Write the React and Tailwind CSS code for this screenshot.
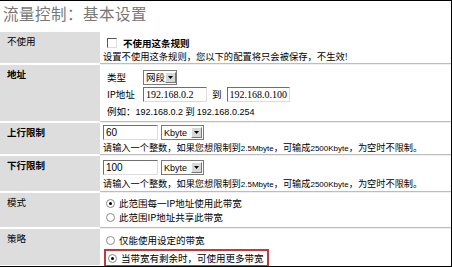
import React from "react";

const cjk = "font-['Noto_Sans_CJK_SC','Noto_Sans',sans-serif]";

const Sep = () => (
  <div className="flex h-[2px]">
    <div className="w-[100px] shrink-0 bg-white" />
    <div className="flex-1 flex flex-col">
      <div className="h-px bg-[#bdbdbd]" />
      <div className="h-px bg-[#f0f0f0]" />
    </div>
  </div>
);

const Row = ({ label, bold, h, children }) => (
  <div className={`flex ${h}`}>
    <div className={`w-[100px] shrink-0 bg-[#dddddd] pl-[7px] pt-[2px] leading-[14px] ${bold ? "font-bold" : ""}`}>
      {label}
    </div>
    <div className="flex-1 pl-[3px] flex flex-col">{children}</div>
  </div>
);

const TextBox = ({ value, w, serif }) => (
  <div
    className={`${w} h-[15px] bg-white border border-t-[#6f6f6f] border-l-[#6f6f6f] border-b-[#dcdcdc] border-r-[#dcdcdc] pl-[2px] text-[10px] leading-[13px] ${
      serif ? "font-['Liberation_Serif',serif]" : "font-['Liberation_Sans',sans-serif] text-[9px]"
    }`}
  >
    {value}
  </div>
);

const Select = ({ value, w }) => (
  <div className={`${w} h-[15px] flex items-center bg-white border border-[#7a7a7a] pl-[2px] whitespace-nowrap`}>
    <span className="flex-1 leading-[13px] whitespace-nowrap">{value}</span>
    <span className="w-[11px] h-[11px] mr-px shrink-0 bg-[#d8d8d8] border border-t-white border-l-white border-b-[#777] border-r-[#777] flex items-center justify-center">
      <svg width="5" height="3" viewBox="0 0 5 3">
        <path d="M0 0h5L2.5 3z" fill="#000" />
      </svg>
    </span>
  </div>
);

const Radio = ({ checked }) => (
  <span className="w-[9px] h-[9px] rounded-full bg-white border border-[#8a8a8a] flex items-center justify-center mr-[4px] shrink-0">
    {checked && <span className="w-[3px] h-[3px] rounded-full bg-black" />}
  </span>
);

const Hint = ({ className }) => (
  <div className={`leading-[12px] text-[9.2px] whitespace-nowrap ${className}`}>
    请输入一个整数，如果您想限制到<span className="font-['Liberation_Sans',sans-serif] text-[8px]">2.5Mbyte</span>，可输成<span className="font-['Liberation_Sans',sans-serif] text-[8px]">2500Kbyte</span>，为空时不限制。
  </div>
);

export default function App() {
  return (
    <div className={`w-[452px] h-[267px] overflow-hidden bg-white border-t border-r border-b border-black text-[9.5px] text-black ${cjk}`}>
      <div className="h-[31px] pl-[3px] pt-[2px] text-[15.5px] leading-[20px] text-[#777] tracking-[0.5px]">
        流量控制：基本设置
      </div>

      <Row label="不使用" h="h-[31px]">
        <div className="flex items-center mt-[5px] ml-[4px] h-[12px]">
          <span className="w-[10px] h-[10px] bg-white border border-t-[#555] border-l-[#555] border-b-[#ddd] border-r-[#ddd] mr-[6px]" />
          <span className="font-bold">不使用这条规则</span>
        </div>
        <div className="leading-[12px] mt-[1px] text-[9.3px]">设置不使用这条规则，您以下的配置将只会被保存，不生效!</div>
      </Row>
      <Sep />

      <Row label="地址" bold h="h-[56px]">
        <div className="flex items-center mt-[5px] ml-[4px] h-[15px]">
          <span className="w-[36px]">类型</span>
          <Select value="网段" w="w-[34px]" />
        </div>
        <div className="flex items-center mt-[2px] ml-[4px] h-[15px]">
          <span className="w-[36px]">IP地址</span>
          <TextBox value="192.168.0.2" w="w-[64px]" serif />
          <span className="mx-[5px]">到</span>
          <TextBox value="192.168.0.100" w="w-[63px]" serif />
        </div>
        <div className="mt-[3px] ml-[4px] leading-[12px]">
          例如：<span className="font-['Liberation_Sans',sans-serif] text-[9px]">192.168.0.2</span> 到{" "}
          <span className="font-['Liberation_Sans',sans-serif] text-[9px]">192.168.0.254</span>
        </div>
      </Row>
      <Sep />

      <Row label="上行限制" bold h="h-[31px]">
        <div className="flex items-center mt-[2px] h-[15px]">
          <TextBox value="60" w="w-[55px]" />
          <span className="w-[3px]" />
          <Select value={<span className="font-['Liberation_Sans',sans-serif] text-[9px]">Kbyte</span>} w="w-[43px]" />
        </div>
        <Hint className="mt-[1px]" />
      </Row>
      <Sep />

      <Row label="下行限制" bold h="h-[35px]">
        <div className="flex items-center mt-[4px] h-[15px]">
          <TextBox value="100" w="w-[55px]" />
          <span className="w-[3px]" />
          <Select value={<span className="font-['Liberation_Sans',sans-serif] text-[9px]">Kbyte</span>} w="w-[43px]" />
        </div>
        <Hint className="mt-[2px]" />
      </Row>
      <Sep />

      <Row label="模式" h="h-[34px]">
        <div className="flex items-center mt-[4px] ml-[3px] h-[13px]">
          <Radio checked />
          此范围每一IP地址使用此带宽
        </div>
        <div className="flex items-center mt-[1px] ml-[3px] h-[13px]">
          <Radio />
          此范围IP地址共享此带宽
        </div>
      </Row>
      <Sep />

      <Row label="策略" h="h-[36px]">
        <div className="flex items-center mt-[5px] ml-[3px] h-[13px]">
          <Radio />
          仅能使用设定的带宽
        </div>
        <div className="flex items-center self-start mt-[2px] ml-px h-[19px] pl-[2px] pr-[3px] border-2 border-[#c0393b]">
          <Radio checked />
          当带宽有剩余时，可使用更多带宽
        </div>
      </Row>
    </div>
  );
}
